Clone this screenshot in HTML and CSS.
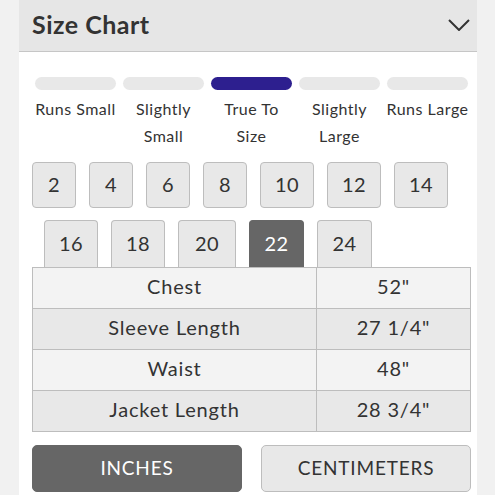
FILE: index.html
```html
<!DOCTYPE html>
<html>
<head>
<meta charset="utf-8">
<link rel="stylesheet" href="styles.css">
</head>
<body>
<div class="panel">
  <div class="header">
    <h1 class="title">Size Chart</h1>
    <svg class="chevron" width="22" height="12" viewBox="0 0 22 12"><path d="M1 1 L11 11 L21 1" fill="none" stroke="#333" stroke-width="2"/></svg>
  </div>
  <div class="fit">
    <div class="fit-col"><div class="bar"></div><div class="fit-label">Runs Small</div></div>
    <div class="fit-col"><div class="bar"></div><div class="fit-label">Slightly<br>Small</div></div>
    <div class="fit-col"><div class="bar active"></div><div class="fit-label">True To<br>Size</div></div>
    <div class="fit-col"><div class="bar"></div><div class="fit-label">Slightly<br>Large</div></div>
    <div class="fit-col"><div class="bar"></div><div class="fit-label">Runs Large</div></div>
  </div>
  <div class="sizes row1">
    <div class="size w44">2</div>
    <div class="size w44">4</div>
    <div class="size w44">6</div>
    <div class="size w44">8</div>
    <div class="size w54">10</div>
    <div class="size w54">12</div>
    <div class="size w54">14</div>
  </div>
  <div class="sizes row2">
    <div class="size open w54">16</div>
    <div class="size open w54">18</div>
    <div class="size open w58">20</div>
    <div class="size open w55 selected">22</div>
    <div class="size open w55">24</div>
  </div>
  <table class="chart">
    <tr class="light"><td class="name">Chest</td><td class="val">52"</td></tr>
    <tr class="dark"><td class="name">Sleeve Length</td><td class="val">27 1/4"</td></tr>
    <tr class="light"><td class="name">Waist</td><td class="val">48"</td></tr>
    <tr class="dark"><td class="name">Jacket Length</td><td class="val">28 3/4"</td></tr>
  </table>
  <div class="units">
    <div class="unit on">INCHES</div>
    <div class="unit">CENTIMETERS</div>
  </div>
</div>
</body>
</html>
```
FILE: styles.css
```css
* { box-sizing: border-box; }
html, body { margin: 0; padding: 0; }
body {
  background: #f1f1f1;
  font-family: Lato, "Open Sans", sans-serif;
  color: #333;
  width: 495px;
  height: 495px;
  overflow: hidden;
}
.panel {
  margin-left: 19px;
  width: 458px;
  height: 495px;
  background: #fff;
}
.header {
  height: 52px;
  background: #e6e6e6;
  border-bottom: 1px solid #c6c6c6;
  display: flex;
  align-items: center;
  justify-content: space-between;
  padding: 0 7px 3px 13px;
}
.title {
  margin: 0;
  font-size: 25px;
  font-weight: 700;
  color: #333;
  letter-spacing: 0.5px;
}
.chevron { margin-top: 2px; }
.fit {
  display: flex;
  gap: 7px;
  padding-left: 16px;
  margin-top: 25px;
}
.fit-col {
  width: 81px;
  display: flex;
  flex-direction: column;
  align-items: center;
}
.bar {
  width: 81px;
  height: 13px;
  border-radius: 7px;
  background: #e8e8e8;
}
.bar.active { background: #2d1f8f; }
.fit-label {
  margin-top: 5px;
  font-size: 16px;
  letter-spacing: 0.5px;
  line-height: 27px;
  text-align: center;
  white-space: nowrap;
  color: #333;
}
.sizes {
  display: flex;
  gap: 13px;
}
.row1 { margin-top: 13px; padding-left: 13px; }
.row2 { margin-top: 12px; padding-left: 25px; }
.size {
  height: 46px;
  background: #e8e8e8;
  border: 1px solid #bdbdbd;
  border-radius: 4px;
  display: flex;
  align-items: center;
  justify-content: center;
  font-size: 20px;
  letter-spacing: 0.5px;
  padding-bottom: 3px;
  color: #333;
}
.size.open {
  height: 47px;
  border-bottom: none;
  border-radius: 4px 4px 0 0;
}
.size.selected {
  background: #666;
  border-color: #666;
  color: #fff;
}
.w44 { width: 44px; }
.w54 { width: 54px; }
.w55 { width: 55px; }
.w58 { width: 58px; }
.chart {
  margin-left: 13px;
  width: 439px;
  border-collapse: collapse;
}
.chart td {
  height: 41px;
  border: 1px solid #bdbdbd;
  text-align: center;
  font-size: 20px;
  letter-spacing: 0.8px;
  padding: 0 0 4px 0;
  color: #333;
}
.chart .name { width: 284px; }
.chart .light td { background: #f3f3f3; }
.chart .dark td { background: #e8e8e8; }
.units {
  display: flex;
  gap: 19px;
  margin-top: 13px;
  padding-left: 13px;
}
.unit {
  width: 210px;
  height: 47px;
  border-radius: 5px;
  background: #e8e8e8;
  border: 1px solid #bdbdbd;
  display: flex;
  align-items: center;
  justify-content: center;
  font-size: 19px;
  letter-spacing: 0.8px;
  padding-bottom: 2px;
  color: #333;
}
.unit.on {
  background: #666;
  border-color: #666;
  color: #fff;
}
```
